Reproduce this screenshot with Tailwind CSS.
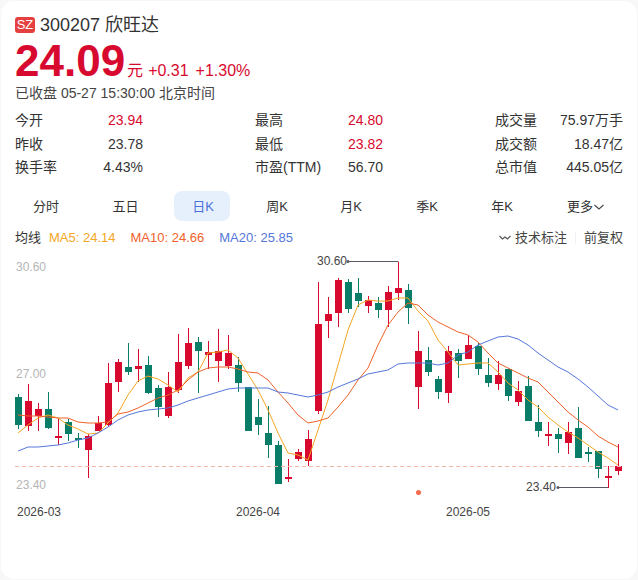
<!DOCTYPE html>
<html><head><meta charset="utf-8"><script src="https://cdn.jsdelivr.net/npm/@tailwindcss/browser@4"></script></head>
<body class="bg-[#f8f8f8] font-['Liberation_Sans','Noto_Sans_CJK_SC',sans-serif]">
<div id="root" class="w-[638px] h-[580px] overflow-hidden bg-white rounded-[14px] shadow-[inset_0_0_0_1px_#f7f7f7] pt-[14px] text-[#333]">
  <div class="flex items-center pl-[15px] h-[22px]">
    <span class="w-[20px] h-[16px] rounded-[3px] bg-[#e5403f] text-white text-[13px] leading-[16px] text-center">SZ</span>
    <span class="ml-[5px] text-[18px] leading-[22px] text-[#333]">300207 欣旺达</span>
  </div>
  <div class="flex items-baseline pl-[15px] h-[45px] text-[#d8092f] mt-[2px]">
    <span class="text-[44px] leading-[46px] font-bold">24.09</span>
    <span class="ml-[2px] text-[16px]">元</span>
    <span class="ml-[5px] text-[16px]">+0.31</span>
    <span class="ml-[7px] text-[16px]">+1.30%</span>
  </div>
  <div class="pl-[15px] text-[14px] leading-[20px] text-[#444]">已收盘 05-27 15:30:00 北京时间</div>
  <div class="flex gap-[112px] pl-[15px] mt-[6px] h-[70px] text-[14px] leading-[23.5px]">
    <div class="w-[128px] shrink-0">
      <div class="flex justify-between"><span>今开</span><span class="text-[#d8092f]">23.94</span></div>
      <div class="flex justify-between"><span>昨收</span><span>23.78</span></div>
      <div class="flex justify-between"><span>换手率</span><span>4.43%</span></div>
    </div>
    <div class="w-[128px] shrink-0">
      <div class="flex justify-between"><span>最高</span><span class="text-[#d8092f]">24.80</span></div>
      <div class="flex justify-between"><span>最低</span><span class="text-[#d8092f]">23.82</span></div>
      <div class="flex justify-between"><span class="whitespace-nowrap">市盈(TTM)</span><span>56.70</span></div>
    </div>
    <div class="w-[128px] shrink-0">
      <div class="flex justify-between"><span>成交量</span><span>75.97万手</span></div>
      <div class="flex justify-between"><span>成交额</span><span>18.47亿</span></div>
      <div class="flex justify-between"><span>总市值</span><span>445.05亿</span></div>
    </div>
  </div>
  <div class="flex items-center mt-[12px] pl-[16px] pr-[15px] h-[30px] text-[13px] whitespace-nowrap">
    <span class="w-[60px] shrink-0 pt-[1px] text-center">分时</span>
    <span class="w-[79px] shrink-0 pt-[1px] ml-[10px] text-center">五日</span>
    <span class="w-[56px] shrink-0 h-[30px] ml-[9px] pl-[2px] leading-[31px] rounded-[8px] bg-[#e6f0fc] text-[#4a72d8] text-center">日K</span>
    <span class="w-[70px] shrink-0 pt-[1px] ml-[12px] text-center">周K</span>
    <span class="w-[70px] shrink-0 pt-[1px] ml-[4px] text-center">月K</span>
    <span class="w-[70px] shrink-0 pt-[1px] ml-[6px] text-center">季K</span>
    <span class="w-[70px] shrink-0 pt-[1px] ml-[5px] text-center">年K</span>
    <span class="ml-[30px] pt-[1px] flex items-center">更多<svg width="12" height="12" viewBox="0 0 12 12" fill="none" stroke="#444" stroke-width="1.1"><path d="M1.500 4l4.500 4 4.500-4"/></svg></span>
  </div>
  <div class="flex items-center pl-[15px] pr-[15px] mt-[7px] h-[20px] text-[13px]">
    <span class="text-[#333]">均线</span>
    <span class="ml-[8px] text-[#f5a623]">MA5: 24.14</span>
    <span class="ml-[15px] text-[#f0622a]">MA10: 24.66</span>
    <span class="ml-[15px] text-[#5577d8]">MA20: 25.85</span>
    <span class="ml-auto flex items-center text-[#444]">
      <svg width="12" height="8" viewBox="0 0 12 8" fill="none" stroke="#555" stroke-width="1.2"><path d="M0.500 2l3 3 2.500-2 2.500 2 3-3"/></svg>
      <span class="ml-[4px]">技术标注</span>
      <span class="mx-[8px] w-px h-[12px] bg-[#eef1f5]"></span>
      <span>前复权</span>
    </span>
  </div>
  <div id="chart" class="relative h-[320px] mt-[6px]">
    <span class="absolute left-[16px] top-[5px] text-[12px] leading-[16px] text-[#b5b5b5]">30.60</span>
    <span class="absolute left-[16px] top-[112px] text-[12px] leading-[16px] text-[#b5b5b5]">27.00</span>
    <span class="absolute left-[16px] top-[223px] text-[12px] leading-[16px] text-[#b5b5b5]">23.40</span>
    <span class="absolute left-[17px] top-[250px] text-[12px] leading-[16px] text-[#444]">2026-03</span>
    <span class="absolute left-[236px] top-[250px] text-[12px] leading-[16px] text-[#444]">2026-04</span>
    <span class="absolute left-[446px] top-[250px] text-[12px] leading-[16px] text-[#444]">2026-05</span>
    <span class="absolute left-[317px] top-[-1px] text-[12px] leading-[16px] text-[#444]">30.60</span>
    <span class="absolute left-[526px] top-[225px] text-[12px] leading-[16px] text-[#444]">23.40</span>
    <svg id="plot" class="absolute left-0 top-[-254px] pointer-events-none" width="638" height="580" viewBox="0 0 638 580">
      <path stroke="#5a5a66" stroke-width="1" fill="none" d="M348 261.500H398.500M558 487.500H608.500"/>
      <circle cx="348" cy="261.500" r="1.500" fill="#5a5a66"/>
      <circle cx="558" cy="487.500" r="1.500" fill="#5a5a66"/>
      <g id="c"></g>
      <line x1="15" x2="622" y1="466.500" y2="466.500" stroke="#f5b5a8" stroke-width="1" stroke-dasharray="4 3"/>
      <circle cx="418.500" cy="492.500" r="2.500" fill="#f4694e"/>
      <polyline id="ma5" fill="none" stroke="#f5a623" stroke-width="1" points="18,433 28,425 38,418 48,415 58,418 68,425 78,429 88,434 98,433 108,423 118,413 128,395 138,381 148,376 158,379 168,385 178,392 188,378 198,372 208,353 218,352 228,350 238,358 248,374 258,390 268,410 278,433 288,453 298,455 308,460 318,430 328,400 338,365 348,330 358,305 368,300 378,301 388,301 398,298 408,298 418,311 428,321 438,340 448,352 458,365 468,364 478,363 488,363 498,372 508,383 518,390 528,400 538,407 548,417 558,425 568,432 578,438 588,445 598,452 608,458 618,465"/>
      <polyline id="ma10" fill="none" stroke="#f0622a" stroke-width="1" points="18,415 28,416 38,416 48,417 58,418 68,418 78,422 88,423 98,423 108,422 118,414 128,412 138,408 148,403 158,398 168,395 178,390 188,380 198,372 208,368 218,367 228,367 238,369 248,372 258,373 268,380 278,392 288,403 298,415 308,423 318,421 328,418 338,407 348,395 358,380 368,368 378,345 388,325 398,312 408,303 418,305 428,315 438,322 448,327 458,332 468,335 478,342 488,353 498,363 508,368 518,373 528,378 538,382 548,392 558,402 568,412 578,420 588,427 598,436 608,442 618,447"/>
      <polyline id="ma20" fill="none" stroke="#5577d8" stroke-width="1" points="18,451 28,447 38,447 48,446 58,445 68,443 78,440 88,438 98,433 108,427 118,420 128,415 138,412 148,410 158,409 168,408 178,405 188,401 198,398 208,395 218,392 228,389 238,388 248,388 258,388 268,388 278,392 288,393 298,395 308,397 318,395 328,392 338,387 348,383 358,379 368,374 378,372 388,370 398,364 408,363 418,363 428,363 438,365 448,363 458,355 468,352 478,345 488,341 498,337 508,336 518,339 528,345 538,353 548,360 558,367 568,372 578,379 588,387 598,396 608,405 618,410"/>
    </svg>
  </div>
</div>
<script>
const R='#d8092f',G='#0a7d68';
const d=[[18.5,G,394,397,425,429],[28.5,R,384,401,426,431],[38.5,R,403,409,416,431],[48.5,G,392,409,428,429],[58.5,R,419,436,437,445],[68.5,G,419,422,434,441],[78.5,G,433,438,439,448],[88.5,R,434,436,450,478],[98.5,R,416,423,431,431],[108.5,R,363,383,425,426],[118.5,R,359,362,382,392],[128.5,G,343,367,372,375],[138.5,R,349,366,369,382],[148.5,G,356,365,393,394],[158.5,G,385,388,407,417],[168.5,R,372,387,416,418],[178.5,R,334,362,390,393],[188.5,R,328,343,366,369],[198.5,G,337,342,351,393],[208.5,R,341,352,355,369],[218.5,R,329,351,361,382],[228.5,R,335,353,366,369],[238.5,G,357,365,383,392],[248.5,G,387,387,431,431],[258.5,G,399,417,425,435],[268.5,G,406,433,445,458],[278.5,G,441,445,484,484],[288.5,R,459,477,479,482],[298.5,R,449,452,459,461],[308.5,R,430,439,461,466],[318.5,R,282,324,411,414],[328.5,R,297,314,321,338],[338.5,R,278,280,313,327],[348.5,G,279,282,309,313],[358.5,G,278,293,301,307],[368.5,R,296,300,306,313],[378.5,G,297,303,310,318],[388.5,R,286,292,310,327],[398.5,R,262,288,293,300],[408.5,G,284,290,308,324],[418.5,R,331,351,387,409],[428.5,G,347,360,372,376],[438.5,G,376,379,392,399],[448.5,R,346,351,393,403],[458.5,G,349,353,361,378],[468.5,R,335,345,359,359],[478.5,G,343,346,369,375],[488.5,G,358,375,383,387],[498.5,R,361,375,384,390],[508.5,G,369,369,396,401],[518.5,R,381,391,402,406],[528.5,G,376,386,421,421],[538.5,G,405,422,431,437],[548.5,R,422,434,436,446],[558.5,G,428,434,439,453],[568.5,R,422,432,443,454],[578.5,G,407,428,458,458],[588.5,G,447,452,453,462],[598.5,G,451,451,469,478],[608.5,R,466,476,478,488],[618.5,R,444,466,471,475]];
let s='';
for(const [x,c,t,a,b,o] of d){s+=`<line x1="${x}" x2="${x}" y1="${t}" y2="${o}" stroke="${c}" stroke-width="1"/><rect x="${x-3.5}" y="${a}" width="7" height="${Math.max(b-a,2)}" fill="${c}"/>`;}
document.getElementById('c').innerHTML=s;
</script>
</body></html>
